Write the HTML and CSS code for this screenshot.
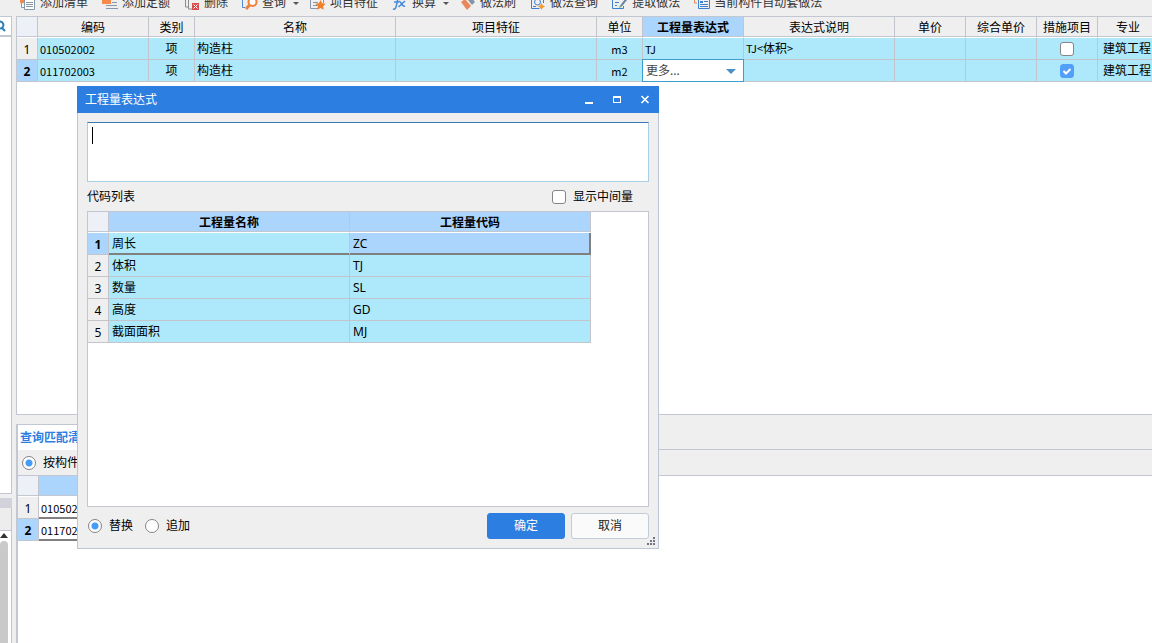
FILE: index.html
```html
<!DOCTYPE html>
<html lang="zh-CN">
<head>
<meta charset="utf-8">
<meta name="viewport" content="width=device-width, initial-scale=1">
<title>工程量表达式</title>
<link rel="stylesheet" href="styles.css">
</head>
<body>
<div class="app">
  <aside class="side">
    <div class="side-top"></div>
    <div class="side-search">
      <svg width="6" height="14" viewBox="0 0 6 14" fill="none" stroke="#2a7fb8" stroke-width="2"><path d="M-1 2.500a3.600 3.600 0 1 1 0 7M1.500 8.500L5 12"/></svg>
    </div>
    <div class="side-list"></div>
    <div class="side-title"></div>
    <div class="side-tools"></div>
    <div class="side-scroll">
      <svg width="8" height="5" viewBox="0 0 8 5"><path d="M0 5L4 0l4 5z" fill="#333"/></svg>
      <div class="side-thumb"></div>
    </div>
  </aside>

  <main class="main">
    <div class="toolbar">
      <button class="tool" type="button"><svg class="icon" viewBox="0 0 16 16"><path d="M0 1h10v7H0z" fill="#f58a4b"/><path d="M4.500 3.500h10v11h-10zM1.500 8v4.500h3" fill="#fff" stroke="#8797a8"/><path d="M6 7.500h7M6 9.500h7M6 11.500h7" stroke="#8797a8"/></svg>添加清单</button>
      <button class="tool" type="button"><svg class="icon" viewBox="0 0 16 16"><path d="M0 5h9v4H0z" fill="#f58a4b"/><path d="M10 7.500h5M4 10.500h11M4 13.500h12" stroke="#8797a8"/></svg>添加定额</button>
      <button class="tool" type="button"><svg class="icon" viewBox="0 0 16 16"><path d="M1.500 2v10h3M4.500 2v12h5" fill="none" stroke="#8b8b8b"/><path d="M8 8h7v7H8z" fill="#d94c4c"/><path d="M9.500 9.500l4 4m0-4l-4 4" stroke="#fff"/></svg>删除</button>
      <button class="tool" type="button"><svg class="icon" viewBox="0 0 16 16"><path d="M.5 3v9.500H3" fill="none" stroke="#5189d2"/><circle cx="10.500" cy="7" r="4" fill="#fff" stroke="#f07f3c" stroke-width="2"/><path d="M7.500 10L4 14" stroke="#f07f3c" stroke-width="3"/></svg>查询<span class="caret"></span></button>
      <button class="tool after-menu" type="button"><svg class="icon" viewBox="0 0 16 16"><path d="M.5 2v11.500h8M3 7.500h5M3 10.500h4M13.500 2v6" fill="none" stroke="#8797a8"/><path d="M10.500 5l1.600 3.200 3.600.5-2.600 2.500.6 3.600-3.200-1.700-3.200 1.700.6-3.600L5.300 8.700l3.600-.5z" fill="#f07f2c"/></svg>项目特征</button>
      <button class="tool" type="button"><svg class="icon" viewBox="0 0 16 16" fill="none" stroke="#4388d8"><path d="M1 14c3 1 3-2 4-6l1-5c.5-2 2-2 3-1M2 7h5" stroke-width="1.500"/><path d="M7 6.500c3-1 2 6 6 4.500M13 6L6.500 12" stroke-width="1.500"/></svg>换算<span class="caret"></span></button>
      <button class="tool after-menu" type="button"><svg class="icon" viewBox="0 0 16 16"><path d="M1 7l4-3 6 7-4 4z" fill="#e9885d"/><path d="M8 5l3-3 4 5-3 3z" fill="#8594a5"/></svg>做法刷</button>
      <button class="tool" type="button"><svg class="icon" viewBox="0 0 16 16" fill="none"><path d="M1.500 1v12.500h8M13.500 1v7" stroke="#3d80d0"/><circle cx="7.500" cy="7" r="3" stroke="#3d80d0"/><path d="M3 11.500h3" stroke="#3d80d0"/><path d="M11.500 8l1.200 2.200L15 11.500l-2.300 1.200L11.500 15l-1.200-2.300L8 11.500l2.300-1.300z" fill="#f49b22"/></svg>做法查询</button>
      <button class="tool" type="button"><svg class="icon" viewBox="0 0 16 16" fill="none"><path d="M7 2H.5v11.500h11V11M3 7.500h4M3 10.500h2" stroke="#3d80d0"/><path d="M14.500 4L9 11" stroke="#66809c" stroke-width="2"/><path d="M8 10l-1 3 3-1" fill="#78b68b"/></svg>提取做法</button>
      <button class="tool" type="button"><svg class="icon" viewBox="0 0 16 16" fill="none"><path d="M.5 4v4H3" stroke="#e88b57"/><path d="M4.500 2v11.500h11V2" stroke="#3d80d0"/><path d="M6 6h3v2H6z" fill="#3d80d0"/><path d="M10 6.500h4M6 9.500h8M6 11.500h8" stroke="#3d80d0"/></svg>当前构件自动套做法</button>
    </div>

    <section class="sheet">
      <table class="grid items">
        <colgroup><col class="c21"><col class="c111"><col class="c46"><col class="c201"><col class="c201"><col class="c46"><col class="c101"><col class="c151"><col class="c71"><col class="c71"><col class="c61"><col class="c61"></colgroup>
        <thead>
          <tr><th class="corner"></th><th>编码</th><th>类别</th><th>名称</th><th>项目特征</th><th>单位</th><th class="picked">工程量表达式</th><th>表达式说明</th><th>单价</th><th>综合单价</th><th>措施项目</th><th>专业</th></tr>
        </thead>
        <tbody>
          <tr><th scope="row">1</th><td class="code">010502002</td><td class="mid">项</td><td>构造柱</td><td></td><td class="mid code">m3</td><td class="code">TJ</td><td><span class="code">TJ&lt;</span>体积<span class="code">&gt;</span></td><td></td><td></td><td><input class="box" type="checkbox" aria-label="措施项目 1"></td><td class="trade">建筑工程</td></tr>
          <tr><th scope="row" class="current">2</th><td class="code">011702003</td><td class="mid">项</td><td>构造柱</td><td></td><td class="mid code">m2</td><td class="editor"><select class="more" aria-label="工程量表达式"><option>更多...</option></select></td><td></td><td></td><td></td><td><input class="box" type="checkbox" aria-label="措施项目 2" checked></td><td class="trade">建筑工程</td></tr>
        </tbody>
      </table>
    </section>

    <section class="match">
      <div class="tabs"><button class="tab" type="button">查询匹配清单</button></div>
      <div class="filter"><label class="option"><input class="dot" type="radio" name="filter" checked>按构件类型过滤</label></div>
      <table class="grid results">
        <colgroup><col class="c21"><col class="c111"></colgroup>
        <thead><tr><th class="corner"></th><th class="picked">编码</th></tr></thead>
        <tbody>
          <tr class="chosen"><th scope="row">1</th><td class="code">010502002</td></tr>
          <tr class="chosen"><th scope="row" class="current">2</th><td class="code">011702003</td></tr>
        </tbody>
      </table>
    </section>
  </main>
</div>

<div class="dialog" role="dialog" aria-labelledby="dialog-title">
  <header class="titlebar">
    <h1 class="title" id="dialog-title">工程量表达式</h1>
    <button class="win" type="button" aria-label="最小化"><svg width="10" height="10" viewBox="0 0 10 10"><path d="M1 7h8v2H1z" fill="#fff"/></svg></button>
    <button class="win" type="button" aria-label="最大化"><svg width="10" height="10" viewBox="0 0 10 10"><path d="M1 1h8v7H1zM2 3v4h6V3z" fill="#fff" fill-rule="evenodd"/></svg></button>
    <button class="win close" type="button" aria-label="关闭"><svg width="10" height="10" viewBox="0 0 10 10"><path d="M1.500 1l7 7m0-7l-7 7" stroke="#fff" stroke-width="1.600"/></svg></button>
  </header>
  <div class="content">
    <textarea class="expression" aria-label="工程量表达式"></textarea>
    <div class="caption"><span>代码列表</span><label class="option"><input class="box" type="checkbox">显示中间量</label></div>
    <div class="codes">
      <table class="grid list">
        <colgroup><col class="c21"><col class="c241"><col class="c241"></colgroup>
        <thead><tr><th class="corner"></th><th class="picked">工程量名称</th><th class="picked">工程量代码</th></tr></thead>
        <tbody>
          <tr class="chosen"><th scope="row" class="current">1</th><td>周长</td><td class="focus">ZC</td></tr>
          <tr><th scope="row">2</th><td>体积</td><td>TJ</td></tr>
          <tr><th scope="row">3</th><td>数量</td><td>SL</td></tr>
          <tr><th scope="row">4</th><td>高度</td><td>GD</td></tr>
          <tr><th scope="row">5</th><td>截面面积</td><td>MJ</td></tr>
        </tbody>
      </table>
    </div>
    <footer class="actions">
      <label class="option"><input class="dot" type="radio" name="mode" checked>替换</label>
      <label class="option"><input class="dot" type="radio" name="mode">追加</label>
      <span class="spacer"></span>
      <span class="buttons">
        <button class="button primary" type="button">确定</button>
        <button class="button" type="button">取消</button>
      </span>
    </footer>
  </div>
  <svg class="grip" width="8" height="8" viewBox="0 0 8 8" fill="#70757f"><path d="M6 0h2v2H6zM3 3h2v2H3zM6 3h2v2H6zM0 6h2v2H0zM3 6h2v2H3zM6 6h2v2H6z"/></svg>
</div>
</body>
</html>
```

FILE: styles.css
```css
* { box-sizing: border-box; }
html, body { height: 100%; }
body {
  margin: 0;
  overflow: hidden;
  background: #efefef;
  color: #000;
  font: 12px/16px "Noto Sans", "Noto Sans CJK SC", sans-serif;
}
button, input, select, textarea { margin: 0; font: inherit; color: inherit; }

.app { display: flex; gap: 4px; height: 100vh; }

/* left panel */
.side { display: flex; flex: none; flex-direction: column; width: 12px; }
.side-top { height: 16px; }
.side-search { height: 20px; border: solid #c3c7d1; border-width: 1px 1px 1px 0; background: #fff; padding-top: 2px; overflow: hidden; }
.side-list { height: 458px; border: solid #c3c7d1; border-width: 1px 1px 1px 0; background: #fff; }
.side-title { height: 10px; margin-top: 4px; background: #d2d3da; }
.side-tools { height: 22px; border-right: 1px solid #c3c7d1; background: #ededed; }
.side-scroll { display: flex; flex: 1; flex-direction: column; gap: 3px; border: solid #c3c7d1; border-width: 1px 1px 0 0; padding-top: 2px; background: #fff; }
.side-thumb { flex: 1; width: 8px; border-radius: 4px 4px 0 0; background: #c9c9c9; }

/* toolbar */
.main { display: flex; flex: 1; flex-direction: column; min-width: 0; }
.toolbar { display: flex; flex: none; align-items: flex-end; height: 16px; padding: 0 0 5px 4px; overflow: hidden; }
.tool { display: flex; flex: none; align-items: center; gap: 4px; padding: 0; border: 0; background: none; color: #333; white-space: nowrap; }
.icon { flex: none; width: 16px; height: 16px; }
.tool + .tool { margin-left: 14px; }
.tool + .after-menu { margin-left: 10px; }
.caret { margin-left: 3px; margin-right: 1px; border: 3px solid transparent; border-top-color: #555; border-bottom: 0; }

/* grids */
.grid { border-collapse: separate; border-spacing: 0; table-layout: fixed; }
.grid th, .grid td { height: 22px; padding: 0 2px; border: solid #c3c4cc; border-width: 0 1px 1px 0; overflow: hidden; white-space: nowrap; text-align: left; }
.grid td { background: #aee9fb; }
.grid thead th { height: 21px; padding-top: 1px; border-bottom-color: #fff; background: #efefef; box-shadow: inset 0 -1px #c3c7d1; font-weight: normal; text-align: center; }
.grid thead .corner { background: #edf0f6; }
.grid thead .picked { background: #acd5fe; font-weight: bold; }
.grid tbody th { padding: 2px 0 0; background: #efefef; font-weight: normal; text-align: center; }
.grid tbody .current { background: #acd5fe; font-weight: bold; }
.grid .mid { text-align: center; }
.grid .code { font-family: "Noto Sans CJK SC", sans-serif; font-size: 11px; }
.grid .trade { padding-left: 5px; }
.grid .box { display: block; margin: 0 auto; }
.c21 { width: 21px; }
.c46 { width: 46px; }
.c61 { width: 61px; }
.c71 { width: 71px; }
.c101 { width: 101px; }
.c111 { width: 111px; }
.c151 { width: 151px; }
.c201 { width: 201px; }
.c241 { width: 241px; }

.sheet { flex: none; height: 399px; border: 1px solid #c3c7d1; border-right: 0; background: #fff; overflow: hidden; }
.items { width: 1142px; }
.grid .editor { position: relative; padding: 0; overflow: visible; }
.more { display: block; width: 100%; height: 21px; padding: 0 3px; border: 0; border-radius: 0; outline: 1px solid #3da0cc; appearance: none; background: #fff; color: #444; }
.editor::after { content: ""; position: absolute; top: 9px; right: 7px; border: 5px solid transparent; border-top-color: #4a90c6; border-bottom: 0; pointer-events: none; }

/* form controls */
.box, .dot { flex: none; width: 14px; height: 14px; border: 1px solid #858585; border-radius: 3px; appearance: none; background: #fff; }
.box:checked { border-color: #519ff9; background: #519ff9 url("data:image/svg+xml,%3Csvg xmlns='http://www.w3.org/2000/svg' viewBox='0 0 12 12'%3E%3Cpath d='M2.500 6l2.500 2.500L9.500 4' fill='none' stroke='white' stroke-width='2'/%3E%3C/svg%3E"); }
.dot { border-radius: 50%; }
.dot:checked { background: radial-gradient(circle, #459cf8 3px, #fff 4px); }
.option { display: flex; align-items: center; gap: 7px; white-space: nowrap; }

/* lower pane */
.match { display: flex; flex: 1; flex-direction: column; margin-top: 9px; border-left: 2px solid #c3c7d1; background: #fff; overflow: hidden; }
.tabs { flex: none; height: 26px; border-bottom: 1px solid #c3c7d1; background: #efefef; }
.tab { width: 90px; height: 26px; padding: 1px 2px 0; border: 0; border-top: 1px solid #c3c7d1; background: #fff; color: #2c7fe0; font-weight: bold; text-align: left; white-space: nowrap; }
.filter { display: flex; flex: none; align-items: center; height: 26px; padding-left: 4px; border-bottom: 1px solid #c3c7d1; background: #efefef; }
.results { width: 132px; }
.results td { background: #fff; }
.grid .chosen td { border-bottom-color: #808080; box-shadow: inset 0 -1px #808080; }

/* dialog window */
.dialog { position: absolute; top: 86px; left: 77px; display: flex; flex-direction: column; width: 582px; height: 463px; border: 1px solid #b9c7d7; border-top: 0; background: #efefef; }
.titlebar { display: flex; flex: none; align-items: center; height: 27px; margin: 0 -1px; padding: 0 4px 0 8px; background: #2c7fe1; color: #fff; }
.title { flex: 1; margin: 0; font-size: 12px; line-height: 16px; font-weight: normal; }
.win { display: flex; align-items: center; justify-content: center; width: 28px; height: 26px; padding: 0; border: 0; background: none; }
.close { width: 20px; margin-left: 4px; }
.content { display: flex; flex: 1; flex-direction: column; padding: 9px 9px 0; }
.expression {
  flex: none; width: 100%; height: 60px; padding: 4px; border: 1px solid #a9cfe6; border-top-color: #3b78b0; outline: 0; resize: none; caret-color: transparent;
  background: #fff linear-gradient(#000, #000) 4px 4px / 1px 17px no-repeat;
}
.caption { display: flex; flex: none; align-items: center; justify-content: space-between; height: 29px; padding-right: 16px; }
.codes { flex: 1; border: 1px solid #c3c7d1; background: #fff; }
.list { width: 503px; }
.list td { padding-left: 3px; }
.grid .focus { border-right-color: #808080; background: #acd5fe; box-shadow: inset -1px -1px #808080; }
.grid .chosen .focus { box-shadow: inset -1px -1px #808080; }
.actions { display: flex; flex: none; align-items: center; gap: 12px; height: 41px; padding: 0 0 3px 1px; }
.spacer { flex: 1; }
.buttons { display: flex; gap: 6px; }
.button { width: 78px; height: 26px; padding: 0; border: 1px solid #c3cbd8; border-radius: 3px; background: #fafafa; color: #222; }
.primary { border-color: #2c7fe1; background: #2c7fe1; color: #fff; }
.grip { position: absolute; right: 3px; bottom: 3px; }
```
